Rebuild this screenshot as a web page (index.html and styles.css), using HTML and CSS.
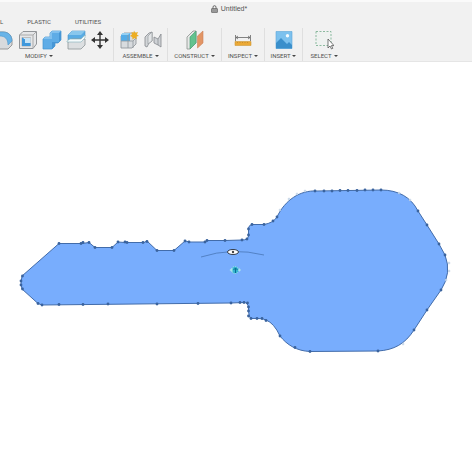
FILE: index.html
```html
<!DOCTYPE html>
<html lang="en">
<head>
<meta charset="utf-8">
<title>Untitled*</title>
<link rel="stylesheet" href="styles.css">
</head>
<body>
<header class="header">
  <div class="title">
    <svg class="lock" viewBox="0 0 7 8"><path d="M2 4V2.2a1.5 1.5 0 0 1 3 0V4" fill="none" stroke="#666"/><rect x=".5" y="3.5" width="6" height="4" rx=".5" fill="#999" stroke="#666" stroke-width=".7"/></svg>
    <span>Untitled*</span>
  </div>
  <nav class="tabs">
    <a class="tab" href="#">L</a>
    <a class="tab" href="#">PLASTIC</a>
    <a class="tab" href="#">UTILITIES</a>
  </nav>
  <div class="toolbar">
    <section class="group modify">
      <div class="icons">
        <button class="tool" aria-label="Fillet"><svg viewBox="0 0 20 20"><path d="M1 2h8c6 0 9 4 9 9v4l-4 4H1z" fill="#d8dadd" stroke="#999"/><path d="M3 2h6c6 0 9 4 9 9l-4 4c0-6-3-9-8-9H1z" fill="#69b4e8" stroke="#4b96ca" stroke-width=".6"/></svg></button>
        <button class="tool" aria-label="Shell"><svg viewBox="0 0 20 20"><path d="M1.500 5 5 1.500h13.500V14L15 18.500H1.500z" fill="#e5e6e8" stroke="#929599"/><path d="M1.500 5H15v13.500M15 5l3.500-3.500" fill="none" stroke="#aaa"/><path d="M4 7.500h8.500v8.500H4z" fill="#fff" stroke="#999" stroke-width=".6"/><path d="M4 7.500 7 9v4h5.500v3H4z" fill="#4098dc"/><path d="M7 8h5.500v5H7z" fill="#c8e4f7"/></svg></button>
        <button class="tool" aria-label="Combine"><svg viewBox="0 0 20 20"><path d="M1 9l2-2h5V3l2-2h9v9l-3 3h-3v3l-3 3H1z" fill="#5facE6" stroke="#4492cf" stroke-width=".7"/><path d="M1 9l2-2h5V3l2-2h9l-2 2h-7v6z" fill="#82c0ee"/><path d="M17 3l2-2v9l-3 3h-3v3l-3 3v-7h7z" fill="#4796d5"/></svg></button>
        <button class="tool" aria-label="Split body"><svg viewBox="0 0 20 20"><path d="M2 5l4-4h13v5l-4 4H2z" fill="#5aace3" stroke="#4a92c5" stroke-width=".6"/><path d="M2 5l4-4h13l-4 4z" fill="#89c7ed"/><path d="M2 12l4-3h13v6l-4 4H2z" fill="#dcdfe1" stroke="#8e9497" stroke-width=".8"/><path d="M1 11l3-2h11l4-4v3l-4 4H1z" fill="#f4fafb" stroke="#81aeb9" stroke-width=".6"/></svg></button>
        <button class="tool" aria-label="Move"><svg viewBox="0 0 20 20"><path d="M10 3v14M3 10h14" stroke="#333" stroke-width="1.400"/><path d="M10 1l3 4H7zM10 19l3-4H7zM1 10l4-3v6zM19 10l-4-3v6z" fill="#333"/></svg></button>
      </div>
      <button class="label">MODIFY <i class="caret"></i></button>
    </section>
    <section class="group assemble">
      <div class="icons">
        <button class="tool" aria-label="New component"><svg viewBox="0 0 20 20"><path d="M2 6l3-3h12v11l-4 4H2z" fill="#d8dbde" stroke="#8c9195" stroke-width=".8"/><path d="M2 5l2-2h7v8H2z" fill="#55ace7"/><path d="M2 5l2-2h7L9 5z" fill="#97d0f2"/><path d="M2 11h12v7M9 5v13M14 11l3-3" fill="none" stroke="#90979d" stroke-width=".8"/><path d="M15 .5l1.200 2.200L19 2l-1.100 2.500L20 6l-2.600.6.400 2.600L15.500 8l-2 1.600-.2-2.700L11 6l2-1.500L12.500 2l2 .8z" fill="#edae22"/></svg></button>
        <button class="tool" aria-label="Joint"><svg viewBox="0 0 20 20"><path d="M2 7l4-4 3-1v9l-3 2-2 4-2-1z" fill="#d2d5d8" stroke="#85898e" stroke-width=".8"/><path d="M5 6l4-4v9l-4 3z" fill="#e3e5e7" stroke="#8c9094" stroke-width=".6"/><path d="M11 7l4 2 3-5v13l-3-2-4-2z" fill="#ced1d5" stroke="#85898e" stroke-width=".8"/><path d="M15 9v6" stroke="#858a8f" stroke-width=".7"/></svg></button>
      </div>
      <button class="label">ASSEMBLE <i class="caret"></i></button>
    </section>
    <section class="group construct">
      <div class="icons"><button class="tool" aria-label="Offset plane"><svg viewBox="0 0 20 20"><path d="M2 7 8 1h3v12l-6 6H2z" fill="#e6e7e7" stroke="#8b928e" stroke-width=".8"/><path d="M5 7l6-6v12l-6 6z" fill="#62c28e" stroke="#4ca375" stroke-width=".7"/><path d="M12.500 6l5.500-5v12l-5.500 5z" fill="#e29565" stroke="#ce8257" stroke-width=".6"/></svg></button></div>
      <button class="label">CONSTRUCT <i class="caret"></i></button>
    </section>
    <section class="group inspect">
      <div class="icons"><button class="tool" aria-label="Measure"><svg viewBox="0 0 20 20"><path d="M2.500 5v6M17.500 5v6M3 7.500h14M5 6L3 7.500 5 9M15 6l2 1.500L15 9" fill="none" stroke="#666" stroke-width=".8"/><path d="M2 11.500h16v4H2z" fill="#eba936" stroke="#cf9837" stroke-width=".6"/><path d="M4.500 12v1M7 12v1M9.500 12v1M12 12v1M14.500 12v1" stroke="#b57c22" stroke-width=".6"/></svg></button></div>
      <button class="label">INSPECT <i class="caret"></i></button>
    </section>
    <section class="group insert">
      <div class="icons"><button class="tool" aria-label="Insert image"><svg viewBox="0 0 20 20"><path d="M2 1.500h16v17H2z" fill="#7cc1ee" stroke="#5ba6d8" stroke-width=".6"/><path d="M2 13l5-5 6 6 2-2 3 3v3.500H2z" fill="#3a8fcb"/><circle cx="13.500" cy="5.800" r="1.700" fill="#f4fafd"/></svg></button></div>
      <button class="label">INSERT <i class="caret"></i></button>
    </section>
    <section class="group select">
      <div class="icons"><button class="tool" aria-label="Select"><svg viewBox="0 0 20 20"><path d="M2 1.500h15v14H2z" fill="#eff2f0" stroke="#80b395" stroke-width=".9" stroke-dasharray="2 1.500"/><path d="M14 9v9l2-2 1.500 3 1.300-.7-1.400-2.700H20z" fill="#fff" stroke="#555" stroke-width=".8"/></svg></button></div>
      <button class="label">SELECT <i class="caret"></i></button>
    </section>
  </div>
</header>
<main>
  <svg class="canvas" viewBox="0 62 474 412" role="img" aria-label="Key sketch profile">
    <defs><marker id="point" viewBox="0 0 4 4" markerWidth="4" markerHeight="4" refX="2" refY="2" markerUnits="userSpaceOnUse"><circle cx="2" cy="2" r="1.400" fill="#3a639e"/></marker></defs>
    <path class="profile" d="M22 276 59 243.500H82L89 242.500 95 247.500H112L118 242 125 242.500H144L147 241 157 250.500H174L185 241 190 242H205L207 240.500H225L242 240Q248 240 248.500 236V228Q249 225 252 224.500H264Q273 223 277 217C285 200 300 190 317 191L381 190C398 190 411 197 418 211L427 225 439 244 445 255Q452 273 441 290L427 310 414 330C405 344 394 350 378 351L310 351.500C297 351 287 345 280 336Q274 323 266 320 262 318 251 318.500 248.500 317 248.500 308 248 302.500 244 302.500L231 303 42 305 38 303.500 22 289Q20 284 22 276Z"/>
    <path class="points" d="M22.500 276 59 243.500 81 243.500 83 242.500 89 242.500 95 247.500 112 247.500 118 242 125 242 127 242.500 143 242.500 147 241.500 157 250.500 174 250.500 185 241 189 242 205 242 207 240.500 225 240.500 242 240 247 239 248.500 235 248.500 229 252 224.500 264 224.500 273 221 277 217M315 191 324 191 332 191 340 190.500 348 190.500 357 190.500 365 190 373 190 381 190M418 211 427 225 439 244 445 255M441 290 427 310 414 330M378 351 310 351.500M295 347.500 280 336M266 320.500 262 318.500 257 318.500 251 318.500 248.500 316 248.500 311 248.500 307 247.500 303 244 302.500 240 302.500 231 303 198 303.500 157 304 108 304 83 304.500 59 304.500 42 305 38 303.500 22.500 289 21 285 21 281"/>
    <g class="ghosts"><circle cx="280" cy="210" r="1"/><circle cx="289" cy="199" r="1"/><circle cx="297" cy="194" r="1"/><circle cx="305" cy="191" r="1"/><circle cx="399" cy="193" r="1"/><circle cx="410" cy="200" r="1"/><circle cx="449" cy="263" r="1"/><circle cx="449" cy="271" r="1"/><circle cx="446" cy="280" r="1"/><circle cx="403" cy="344" r="1"/></g>
    <path d="M201 257Q232 247 264 255" fill="none" stroke="#426fac" stroke-width=".7"/>
    <ellipse cx="233" cy="252" rx="5.500" ry="2.500" fill="#fff" stroke="#333c49"/><circle cx="233" cy="252" r="1.200" fill="#444"/>
    <circle cx="235" cy="270" r="3.500" fill="#35b4cf" stroke="#a9e5ec" stroke-dasharray="1 1"/><path d="M229.500 270l3-2.500v5zM241 270l-2-2v4z" fill="#a9e5ec"/><path d="M235.500 273v-5l-2 2M235.500 268l2 2" fill="none" stroke="#096f92"/>
  </svg>
</main>
</body>
</html>
```
FILE: styles.css
```css
* { box-sizing: border-box; }
body { margin: 0; background: #fff; font-family: "Liberation Sans", Arial, sans-serif; color: #555; }
.header { margin-right: 2px; border-top: 2px solid #fafafa; border-bottom: 1px solid #e5e5e5; background: #f1f1f1; }
.title { display: flex; justify-content: center; align-items: center; gap: 3px; height: 14px; padding-right: 14px; font-size: 7px; line-height: 10px; }
.lock { width: 7px; height: 8px; }
.tabs { display: flex; gap: 24px; height: 12px; align-items: center; font-family: Roboto, "Liberation Sans", sans-serif; }
.tab { color: #505050; text-decoration: none; font-size: 6px; line-height: 8px; white-space: nowrap; }
.toolbar { display: flex; height: 33px; }
.group { display: flex; flex: none; flex-direction: column; align-items: center; gap: 2px; padding-top: 2px; border-right: 1px solid #dfdfdf; }
.group:last-child { border-right: 0; }
.modify { width: 114px; align-items: flex-start; }
.modify .icons { margin-left: -6px; }
.modify .label { margin-left: 25px; }
.assemble { width: 54px; }
.construct { width: 54px; }
.inspect { width: 43px; }
.insert { width: 38px; }
.select { width: 42px; }
.icons { display: flex; gap: 4px; }
.tool { width: 20px; height: 20px; padding: 0; border: 0; background: none; }
.tool svg { display: block; width: 20px; height: 20px; }
.label { display: flex; align-items: center; gap: 2px; padding: 0; border: 0; background: none; color: #505050; font: 6px/8px Roboto, "Liberation Sans", sans-serif; white-space: nowrap; }
.caret { border: 2px solid transparent; border-top-color: #444; border-bottom: 0; }
.canvas { display: block; width: 100%; height: auto; }
.profile { fill: #78adfd; stroke: #426caa; stroke-width: 1; }
.points { fill: none; stroke: none; marker-start: url(#point); marker-mid: url(#point); marker-end: url(#point); }
.ghosts { fill: #d5e4f4; stroke: #aabed5; stroke-width: .4; }
```
